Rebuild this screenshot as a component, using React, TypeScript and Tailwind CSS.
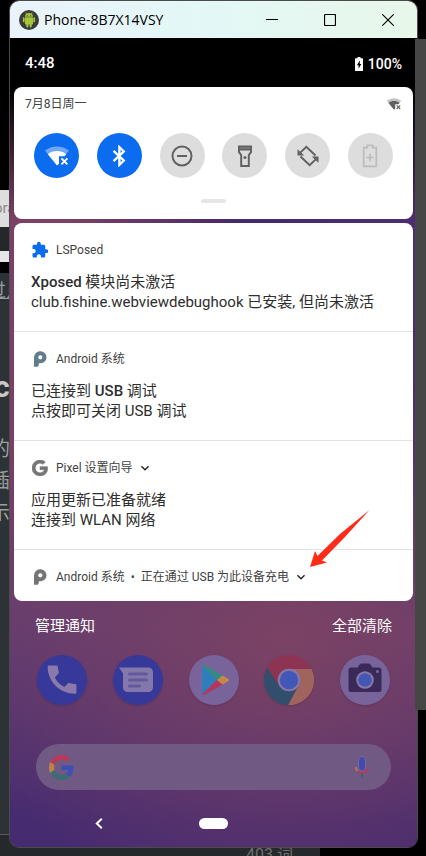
import React from "react";
import { MdExtension, MdKeyboardArrowDown } from "react-icons/md";

type IconProps = { className?: string };

function GoogleG({ className, mono }: IconProps & { mono?: string }) {
  return (
    <svg viewBox="0 0 48 48" className={className} stroke={mono ?? "none"} strokeWidth="1.500" aria-hidden="true">
      <path fill={mono ?? "#b83a58"} d="M24 9.5c3.54 0 6.71 1.22 9.21 3.6l6.85-6.85C35.9 2.38 30.47 0 24 0 14.62 0 6.51 5.38 2.56 13.22l7.98 6.19C12.43 13.72 17.74 9.5 24 9.5z" />
      <path fill={mono ?? "#3d4fb5"} d="M46.98 24.55c0-1.57-.15-3.09-.38-4.55H24v9.02h12.94c-.58 2.96-2.26 5.48-4.78 7.18l7.73 6c4.51-4.18 7.09-10.36 7.09-17.65z" />
      <path fill={mono ?? "#bb8445"} d="M10.53 28.59c-.48-1.45-.76-2.99-.76-4.59s.27-3.14.76-4.59l-7.98-6.19C.92 16.46 0 20.12 0 24c0 3.88.92 7.54 2.56 10.78l7.97-6.19z" />
      <path fill={mono ?? "#3b6d73"} d="M24 48c6.48 0 11.93-2.13 15.89-5.81l-7.73-6c-2.15 1.45-4.92 2.3-8.16 2.3-6.26 0-11.57-4.22-13.47-9.91l-7.98 6.19C6.51 42.62 14.62 48 24 48z" />
    </svg>
  );
}

function AndroidLogo() {
  return (
    <svg viewBox="0 0 20 20" className="size-5" aria-hidden="true">
      <circle cx="10" cy="10" r="10" fill="#3b3b3b" />
      <g fill="#a4c639">
        <path d="M6 6.800a4 3.800 0 0 1 8 0z" />
        <path d="M6.7 2.400l1.300 2M13.3 2.400L12 4.4" stroke="#a4c639" strokeWidth=".7" />
        <rect x="5.900" y="7.200" width="8.200" height="7.200" rx="1" />
        <rect x="3.900" y="7.200" width="1.700" height="5" rx=".8" />
        <rect x="14.400" y="7.200" width="1.700" height="5" rx=".8" />
        <rect x="7.300" y="13" width="2.100" height="4.400" rx=".8" />
        <rect x="10.600" y="13" width="2.100" height="4.400" rx=".8" />
      </g>
      <circle cx="8.3" cy="5.3" r=".5" fill="#3b3b3b" />
      <circle cx="11.7" cy="5.3" r=".5" fill="#3b3b3b" />
    </svg>
  );
}

function WifiOffIcon({ className, faint, solid }: IconProps & { faint: string; solid: string }) {
  return (
    <svg viewBox="0 0 24 20" className={className} aria-hidden="true">
      <path fill={faint} d="M0 4.6C3.2 1.9 7.300 .4 12 .4s8.800 1.500 12 4.200L20.800 8.600C18.500 6.600 15.400 5.500 12 5.500S5.500 6.600 3.200 8.600z" />
      <path fill={solid} d="M2.800 8.200C5.300 6.200 8.500 5.100 12 5.100s6.700 1.100 9.200 3.100L19.500 10.300H14v7.500l-2 1.600z" />
      <path stroke={solid} strokeWidth="1.900" d="M16.400 12.300l6 6M22.400 12.300l-6 6" />
    </svg>
  );
}

function BluetoothIcon() {
  return (
    <svg viewBox="0 0 24 24" className="size-6" fill="none" stroke="#fff" strokeWidth="2.300" aria-hidden="true">
      <path d="M6.500 6.800l10.300 9.700-4.400 4.300V3.200l4.400 4.300L6.500 17.200" />
    </svg>
  );
}

function DndIcon() {
  return (
    <svg viewBox="0 0 24 24" className="size-6" fill="none" stroke="#616161" strokeWidth="2" aria-hidden="true">
      <circle cx="12" cy="12" r="9.500" />
      <path d="M7 12h10" />
    </svg>
  );
}

function TorchIcon() {
  return (
    <svg viewBox="0 0 24 24" className="size-6" fill="none" stroke="#616161" strokeWidth="2" aria-hidden="true">
      <path fill="#8b8b8b" d="M6 2.600h12v3H6z" />
      <path d="M6 5.600v2.600L8.200 11v10.900h7.600V11L18 8.200V5.600" />
      <circle cx="12" cy="13.600" r="1.500" fill="#616161" stroke="none" />
    </svg>
  );
}

function RotateIcon() {
  return (
    <svg viewBox="0 0 24 24" className="size-6" fill="none" stroke="#616161" strokeWidth="2" aria-hidden="true">
      <path d="M19.500 11.500L10.300 2.800 4.600 8.400" />
      <path d="M4.500 12.500l9.200 8.700 5.700-5.600" />
      <path fill="#616161" stroke="none" d="M1.500 5.200v6.300h6.800zM22.500 18.800v-6.300h-6.800z" />
    </svg>
  );
}

function BatterySaverIcon() {
  return (
    <svg viewBox="0 0 24 24" className="size-6" fill="none" stroke="#bcbcbc" strokeWidth="1.700" aria-hidden="true">
      <path d="M9.300 3.600V1.300h5.400v2.300h3.600v18.800H5.700V3.600z" />
      <path d="M12 9.800v7.400M8.300 13.500h7.400" />
    </svg>
  );
}

function BatteryChargingIcon() {
  return (
    <svg viewBox="0 0 8 14" className="h-3.5 w-2" aria-hidden="true">
      <path fill="#fff" d="M2.500 0h3v1.300H7.500a.5.5 0 0 1 .5.500V13.500a.5.5 0 0 1-.5.500H.5a.5.5 0 0 1-.5-.500V1.800a.5.5 0 0 1 .5-.500H2.500z" />
      <path fill="#000" d="M4.800 3.500L1.900 8.300h1.700v3.400L6.300 7H4.800z" />
    </svg>
  );
}

function PMark({ color }: { color: string }) {
  return (
    <svg viewBox="0 0 18 18" className="size-[18px]" aria-hidden="true">
      <path fill={color} fillRule="evenodd" d="M3 16.800V7.500A6 6 0 0 1 9 1.300h.5a6 6 0 0 1 0 12H7.800v.9a2.600 2.600 0 0 1-2.600 2.600zM9.300 5.200a2.100 2.100 0 1 0 .010 4.200 2.100 2.100 0 0 0 0-4.200z" />
    </svg>
  );
}

function PhoneApp() {
  return (
    <svg viewBox="0 0 50 50" className="size-full" aria-hidden="true">
      <circle cx="25" cy="25" r="25" fill="#36389a" />
      <path fill="#8a7aab" d="M12 10.500h7.500c.800 0 1.200.5 1.300 1.200.1 2 .5 3.700 1 5.400.2.600 0 1.100-.4 1.500l-3.600 3.800c2.500 4.700 5.600 7.500 9.600 9.500l3.600-3.600c.4-.4.900-.5 1.500-.3 1.800.6 3.600.9 5.600 1 .800 0 1.300.5 1.300 1.300v7.200c0 .800-.5 1.300-1.300 1.300C22.500 38.800 10.700 26.500 10.700 11.800c0-.8.5-1.300 1.300-1.300z" />
    </svg>
  );
}

function MessagesApp() {
  return (
    <svg viewBox="0 0 50 50" className="size-full" aria-hidden="true">
      <circle cx="25" cy="25" r="25" fill="#36389a" />
      <path fill="#8477ac" d="M6 12.500h29.500a4.500 4.500 0 0 1 4.500 4.500v15.500a4.500 4.500 0 0 1-4.500 4.500h-21a4.500 4.500 0 0 1-4.500-4.500V18.500z" />
      <path stroke="#63599b" strokeWidth="3" strokeLinecap="round" d="M16.500 19h17M16.500 25h17M16.500 31h10" />
    </svg>
  );
}

function PlayApp() {
  return (
    <svg viewBox="0 0 50 50" className="size-full" aria-hidden="true">
      <circle cx="25" cy="25" r="25" fill="#78639a" />
      <path fill="#2f7dbc" d="M13 10.500v29L28 25z" />
      <path fill="#328c83" d="M13 10.500c.6-.8 1.600-.7 2.500-.2L33.500 20.500 28 25z" />
      <path fill="#b5355b" d="M13 39.500c.6.800 1.600.7 2.500.2L33.500 29.500 28 25z" />
      <path fill="#c68a47" d="M33.500 20.500l6 3.500c.9.500.9 1.500 0 2l-6 3.500L28 25z" />
    </svg>
  );
}

function ChromeApp() {
  return (
    <svg viewBox="0 0 50 50" className="size-full" aria-hidden="true">
      <circle cx="25" cy="25" r="25" fill="#8e3453" />
      <path fill="#a0645f" d="M25 14h22.500A25 25 0 0 1 24 50L34.500 30.500z" />
      <path fill="#314e6c" d="M3.300 12.600A25 25 0 0 0 24 50l10.500-19.500L15.500 31z" />
      <path fill="#8e3453" d="M3.300 12.600L15.500 31 25 14z" />
      <circle cx="25" cy="25" r="11.300" fill="#8975a6" />
      <circle cx="25" cy="25" r="9.200" fill="#4258b8" />
    </svg>
  );
}

function CameraApp() {
  return (
    <svg viewBox="0 0 50 50" className="size-full" aria-hidden="true">
      <circle cx="25" cy="25" r="25" fill="#78649b" />
      <path fill="#3b2a59" d="M11 12.500h6.500l2-3a2.500 2.500 0 0 1 2-1h7a2.500 2.500 0 0 1 2 1l2 3H39a2.500 2.500 0 0 1 2.500 2.500v19.500a2.500 2.500 0 0 1-2.500 2.500H11a2.500 2.500 0 0 1-2.500-2.500V15a2.500 2.500 0 0 1 2.500-2.500z" />
      <circle cx="25" cy="25" r="8.800" fill="#8b78a8" />
      <circle cx="25" cy="25" r="6.800" fill="#4357b5" />
      <circle cx="37.500" cy="16.500" r="1.500" fill="#7d6a9c" />
    </svg>
  );
}

function MicIcon() {
  return (
    <svg viewBox="0 0 16 22" className="h-[22px] w-4" fill="none" strokeWidth="2" aria-hidden="true">
      <path stroke="#bd7455" d="M2 11a6 6 0 0 0 1.800 4.200" />
      <path stroke="#b83a58" d="M3.500 15a6.200 6.200 0 0 0 10.500-4" />
      <path stroke="#41606f" d="M8 17v4.500" />
      <rect x="4.500" y="0.500" width="7" height="14.500" rx="3.500" fill="#4349ad" stroke="#7f6da0" strokeWidth=".8" />
    </svg>
  );
}

function RedArrow() {
  return (
    <svg viewBox="0 0 60 58" className="pointer-events-none absolute -top-10 left-[296px] h-[58px] w-[60px]" aria-hidden="true">
      <path fill="#ff2a17" d="M0 57L5 41l2.500 5L30 24 59.500 0 34 28 12 50.500l5 2z" />
    </svg>
  );
}

const tiles = [
  { label: "WLAN", on: true, icon: <WifiOffIcon className="h-5 w-6" faint="#6ea6f8" solid="#fff" /> },
  { label: "蓝牙", on: true, icon: <BluetoothIcon /> },
  { label: "勿扰", on: false, icon: <DndIcon /> },
  { label: "手电筒", on: false, icon: <TorchIcon /> },
  { label: "自动旋转", on: false, icon: <RotateIcon /> },
  { label: "省电模式", on: false, icon: <BatterySaverIcon /> },
];

const apps = [
  { label: "电话", icon: <PhoneApp /> },
  { label: "信息", icon: <MessagesApp /> },
  { label: "Play", icon: <PlayApp /> },
  { label: "Chrome", icon: <ChromeApp /> },
  { label: "相机", icon: <CameraApp /> },
];

type NoticeProps = {
  icon: React.ReactNode;
  app: React.ReactNode;
  expandable?: boolean;
  children?: React.ReactNode;
};

function Notice({ icon, app, expandable, children }: NoticeProps) {
  return (
    <li className="relative border-b border-[#e2e2e2] px-[17px] pt-[18px] pb-[19px] last:border-0 last:pb-[15px]">
      <div className="flex h-[18px] items-center text-xs whitespace-nowrap text-[#424242]">
        <span className="mr-[7px] flex w-[18px] justify-center">{icon}</span>
        <span>{app}</span>
        {expandable && (
          <button aria-label="展开" className="ml-1 text-[#212121]">
            <MdKeyboardArrowDown className="size-4" />
          </button>
        )}
      </div>
      {children}
    </li>
  );
}

function NoticeText({ title, body }: { title: React.ReactNode; body: string }) {
  return (
    <div className="mt-[13px] text-[15px] leading-5 text-[#2e2e2e]">
      <h2>{title}</h2>
      <p>{body}</p>
    </div>
  );
}

function Backdrop() {
  return (
    <div className="absolute inset-0 flex flex-col overflow-hidden whitespace-nowrap" aria-hidden="true">
      <div className="h-[190px] bg-black" />
      <div className="h-[37px] bg-[#dedede] text-[15px] leading-9 text-[#8a8a8a]">
        <span className="-ml-1.5">ora</span>
      </div>
      <div className="h-6 bg-[#25272a]" />
      <div className="h-[11px] bg-[#e6e6e6]" />
      <div className="h-[11px] bg-black" />
      <div className="w-80 flex-1 border-b border-[#595c55] bg-[#2d3236] text-[#9a9d9f]">
        <p className="-ml-3 pt-1 text-lg leading-7 underline">过点</p>
        <p className="-ml-1.5 pt-16 text-3xl leading-9 font-bold text-[#c8c8c8]">c</p>
        <div className="-ml-2.5 pt-7 text-xl leading-8">
          <p>的</p>
          <p>插</p>
          <p>示</p>
        </div>
      </div>
      <div className="h-[21px] w-80 bg-[#26292c] pt-2 pl-[246px] text-base leading-6 text-[#6d6f70]">403 词</div>
    </div>
  );
}

export default function App() {
  return (
    <div className="relative min-h-screen overflow-hidden bg-black pr-2 pb-[7px] pl-[9px] font-[Roboto,'Noto_Sans_CJK_SC',sans-serif]">
      <Backdrop />

      <main className="relative overflow-hidden rounded-[10px] border border-[#4b4b4b] bg-black">
        <header className="flex h-[37px] items-center bg-linear-to-r from-[#eaf3fb] via-[#e3f8f6] to-[#e8f7ea] pl-[9px] text-black">
          <AndroidLogo />
          <h1 className="ml-[5px] flex-1 font-['Open_Sans',sans-serif] text-sm whitespace-nowrap">Phone-8B7X14VSY</h1>
          <button aria-label="最小化" className="flex h-full w-[58px] items-center justify-center">
            <svg viewBox="0 0 12 12" className="size-3" stroke="currentColor"><path d="M0 5.500h12" /></svg>
          </button>
          <button aria-label="最大化" className="flex h-full w-[58px] items-center justify-center">
            <svg viewBox="0 0 12 12" className="size-3" stroke="currentColor" fill="none"><rect x=".5" y=".5" width="11" height="11" rx="1" strokeWidth="1.200" /></svg>
          </button>
          <button aria-label="关闭" className="flex h-full w-[58px] items-center justify-center">
            <svg viewBox="0 0 12 12" className="size-3" stroke="currentColor" strokeWidth="1.100"><path d="M.3.300l11.400 11.400M11.700.300L.3 11.700" /></svg>
          </button>
        </header>

        <div className="bg-[linear-gradient(180deg,#000_0,#000_49px,transparent_180px),radial-gradient(ellipse_85%_34%_at_68%_74%,#7b4264_0,#7b426400_100%),linear-gradient(180deg,transparent_50%,#623c70_73%,#462b70_97%),linear-gradient(90deg,#7a4066_0,#7a4066_15%,#482a6b_55%,#4c2d70_100%)]">
          <div className="flex h-[51px] items-center justify-between px-[15px] text-[15px] font-medium text-white">
            <span>4:48</span>
            <span className="flex items-center gap-[5px] text-sm">
              <BatteryChargingIcon />
              100%
            </span>
          </div>

          <section className="mx-1 -mt-0.5 rounded-lg bg-white pt-[9px] pb-4" aria-label="快捷设置">
            <div className="flex h-4 items-center justify-between pr-[11px] pl-[11px] text-xs text-[#424242]">
              <span>7月8日周一</span>
              <WifiOffIcon className="h-3 w-4" faint="#c4c4c4" solid="#616161" />
            </div>
            <div className="mt-[21px] flex justify-between px-5">
              {tiles.map((t) => (
                <button
                  key={t.label}
                  aria-label={t.label}
                  aria-pressed={t.on}
                  className={`flex size-[45px] items-center justify-center rounded-full ${t.on ? "bg-[#0b6cf0]" : "bg-[#dcdddc]"}`}
                >
                  {t.icon}
                </button>
              ))}
            </div>
            <div className="mx-auto mt-[21px] h-1 w-[25px] rounded-full bg-[#e6e6e6]" />
          </section>

          <ul className="mx-1 mt-1 rounded-lg bg-white">
            <Notice icon={<MdExtension className="size-[18px] text-[#0b6cf0]" />} app="LSPosed">
              <NoticeText
                title={<><span className="font-medium">Xposed</span> 模块尚未激活</>}
                body="club.fishine.webviewdebughook 已安装, 但尚未激活"
              />
            </Notice>
            <Notice icon={<PMark color="#607d8b" />} app="Android 系统">
              <NoticeText
                title={<>已连接到 <span className="font-medium">USB</span> 调试</>}
                body="点按即可关闭 USB 调试"
              />
            </Notice>
            <Notice icon={<GoogleG className="size-4" mono="#757575" />} app="Pixel 设置向导" expandable>
              <NoticeText title="应用更新已准备就绪" body="连接到 WLAN 网络" />
            </Notice>
            <Notice
              icon={<PMark color="#757575" />}
              app={<>Android 系统<span className="mx-1.5">•</span>正在通过 USB 为此设备充电</>}
              expandable
            >
              <RedArrow />
            </Notice>
          </ul>

          <div className="mt-[15px] flex justify-between px-[25px] text-[15px] leading-5 text-white">
            <button>管理通知</button>
            <button>全部清除</button>
          </div>

          <div className="mt-[19px] flex justify-between px-[27px]">
            {apps.map((a) => (
              <button key={a.label} aria-label={a.label} className="size-[50px] rounded-full shadow-sm">
                {a.icon}
              </button>
            ))}
          </div>

          <div className="mx-[26px] mt-[39px] flex h-[46px] items-center rounded-full bg-[#705a84] pr-[21px] pl-[13px]">
            <GoogleG className="size-[25px]" />
            <input type="text" aria-label="搜索" className="min-w-0 flex-1 bg-transparent px-3 text-white outline-none" />
            <button aria-label="语音搜索"><MicIcon /></button>
          </div>

          <nav className="mt-7 grid h-[11px] grid-cols-[1fr_auto_1fr] items-center">
            <button aria-label="返回" className="flex justify-center pr-3">
              <svg viewBox="0 0 8 11" className="h-[11px] w-2" fill="none" stroke="#fff" strokeWidth="2"><path d="M6.800.800L1.800 5.500l5 4.700" /></svg>
            </button>
            <button aria-label="主屏幕" className="h-[11px] w-[29px] rounded-full bg-white" />
          </nav>
          <div className="h-[18px]" />
        </div>
      </main>

      <div className="absolute top-[39px] right-0 bottom-[146px] w-[11px] bg-[#464646]" />
    </div>
  );
}
